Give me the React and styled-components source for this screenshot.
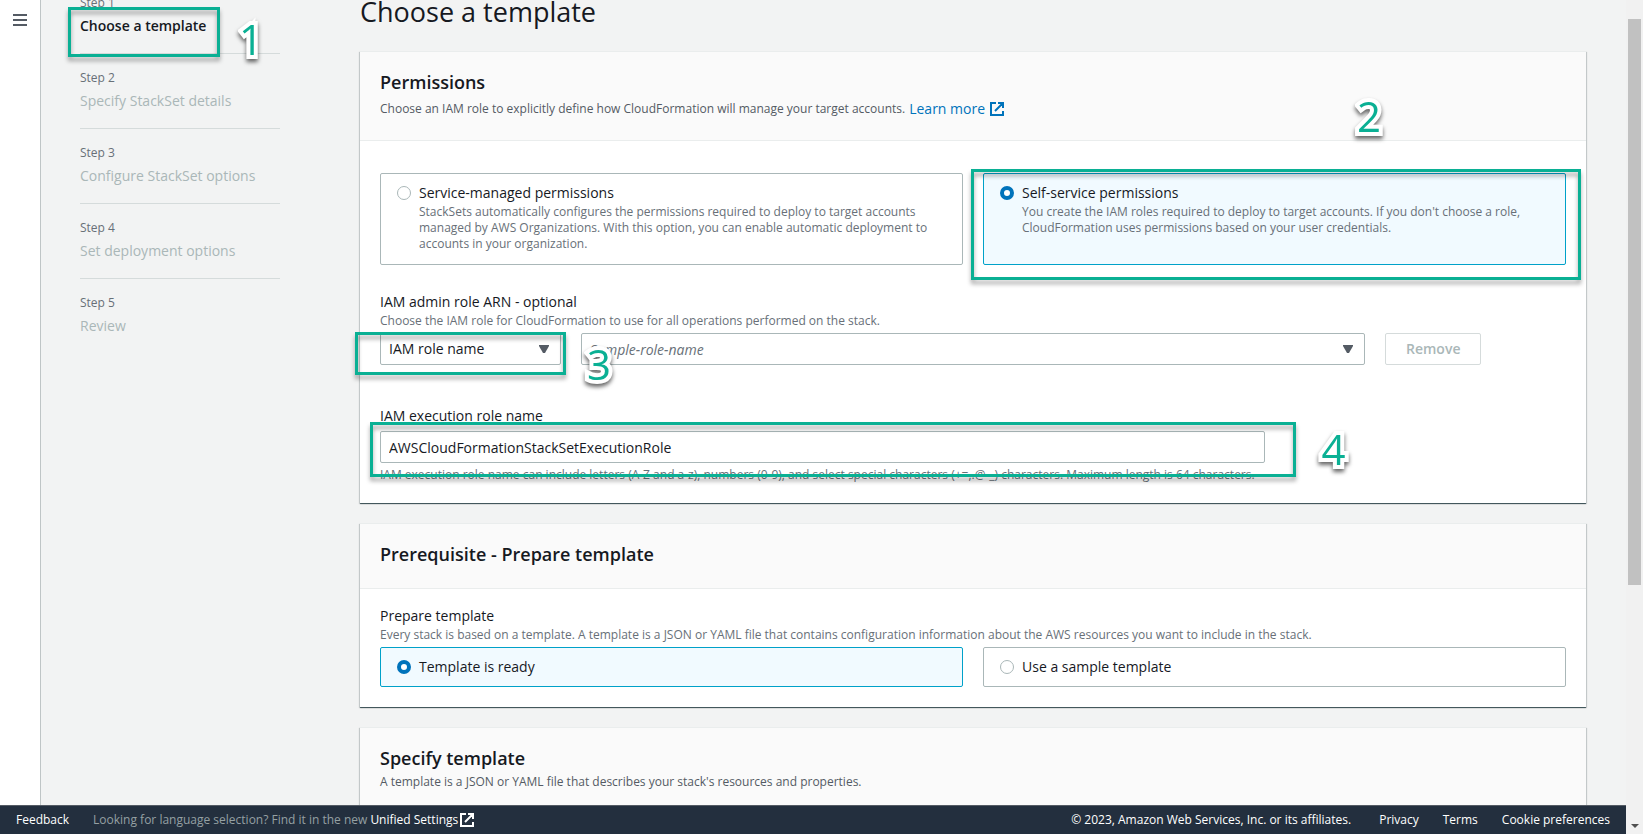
import React from "react";
import styled, { createGlobalStyle, css } from "styled-components";

const GlobalStyle = createGlobalStyle`
  *, *::before, *::after { box-sizing: border-box; }
  body {
    margin: 0;
    background: #f2f3f3;
    color: #16191f;
    font: 14px/22px "Open Sans", "Noto Sans", sans-serif;
  }
  button, input, select { font: inherit; color: inherit; }
  h1, h2, p, ol, fieldset { margin: 0; padding: 0; border: 0; min-width: 0; }
`;

const Shell = styled.div`
  display: flex;
  flex-direction: column;
  height: 100vh;
  overflow: hidden;
`;

const Window = styled.div`
  display: flex;
  height: 100vh;
`;

const Column = styled.div`
  flex: 1;
  min-width: 0;
`;

const Workspace = styled.div`
  flex: 1;
  min-height: 0;
  display: flex;
`;

const Rail = styled.nav`
  flex: none;
  width: 41px;
  padding: 11px 0 0 10px;
  background: #fff;
  border-right: 1px solid #bfc5c6;
`;

const IconButton = styled.button`
  display: flex;
  padding: 3px;
  border: 0;
  background: none;
  color: #545b64;
`;

const Viewport = styled.div`
  flex: 1;
  min-width: 0;
  overflow: hidden;
`;

/* The page is scrolled slightly past its first line. */
const Scrolled = styled.div`
  display: flex;
  gap: 80px;
  margin-top: -5px;
  padding: 0 40px 0 39px;
`;

const Steps = styled.ol`
  flex: none;
  width: 200px;
  list-style: none;
`;

const Step = styled.li`
  position: relative;
  display: flex;
  flex-direction: column;
  gap: 4px;
  padding-bottom: 16px;
  & + & {
    padding-top: 16px;
    border-top: 1px solid #d5dbdb;
  }
`;

const StepLabel = styled.span`
  font-size: 12px;
  line-height: 16px;
  color: #687078;
`;

const StepName = styled.span`
  color: ${(p) => (p.$active ? "#16191f" : "#aab7b8")};
  font-weight: ${(p) => (p.$active ? 600 : 400)};
`;

const Main = styled.main`
  flex: 1;
  min-width: 0;
  display: flex;
  flex-direction: column;
  gap: 20px;
`;

const PageTitle = styled.h1`
  padding-bottom: 2px;
  font-size: 27px;
  line-height: 34px;
  font-weight: 400;
`;

const Card = styled.section`
  border-top: 1px solid #eaeded;
  background: #fff;
  box-shadow: 0 1px 1px 0 rgba(0, 28, 36, 0.3), 1px 1px 1px 0 rgba(0, 28, 36, 0.15),
    -1px 1px 1px 0 rgba(0, 28, 36, 0.15), 0 1px 0 0 #879596;
`;

const CardHeader = styled.header`
  padding: 16px 20px 20px;
  background: #fafafa;
  border-bottom: 1px solid #eaeded;
`;

const CardTitle = styled.h2`
  font-size: 18px;
  line-height: 28px;
  font-weight: 600;
`;

const CardText = styled.p`
  display: flex;
  align-items: center;
  gap: 4px;
  margin-top: 2px;
  font-size: 12px;
  line-height: ${(p) => (p.$tall ? 22 : 16)}px;
  color: #545b64;
`;

const CardBody = styled.div`
  display: flex;
  flex-direction: column;
  padding: ${(p) => (p.$roomy ? 32 : 16)}px 20px 20px;
`;

const Link = styled.a`
  display: inline-flex;
  align-items: center;
  gap: 5px;
  font-size: 14px;
  color: #0073bb;
  text-decoration: none;
`;

const TileRow = styled.div`
  display: grid;
  grid-template-columns: 1fr 1fr;
  gap: 20px;
`;

const TileFrame = styled.label`
  position: relative;
  display: flex;
  gap: 8px;
  padding: 8px 16px;
  border: 1px solid ${(p) => (p.$selected ? "#00a1c9" : "#aab7b8")};
  border-radius: 2px;
  background: ${(p) => (p.$selected ? "#f1faff" : "#fff")};
`;

const Radio = styled.input`
  appearance: none;
  flex: none;
  width: 14px;
  height: 14px;
  margin: 4px 0;
  border: 1px solid #aab7b8;
  border-radius: 50%;
  background: #fff;
  &:checked { border: 4px solid #0073bb; }
`;

const TileText = styled.span`
  display: flex;
  flex-direction: column;
`;

const TileNote = styled.span`
  padding-bottom: 4px;
  font-size: 12px;
  line-height: 16px;
  color: #687078;
`;

const Field = styled.div`
  display: flex;
  flex-direction: column;
  margin-top: ${(p) => p.$space || 0}px;
`;

const labelText = css`
  display: block;
  line-height: 22px;
`;

const FieldLabel = styled.label`${labelText}`;
const FieldLegend = styled.legend`${labelText} padding: 0;`;

const Hint = styled.p`
  font-size: 12px;
  line-height: 16px;
  color: #687078;
`;

const ControlGrid = styled.div`
  display: grid;
  grid-template-columns: repeat(12, 1fr);
  gap: 20px;
  margin: 4px 0;
`;

const Cell = styled.div`
  position: relative;
  grid-column: span ${(p) => p.$span};
`;

const control = css`
  display: block;
  width: 100%;
  height: 32px;
  padding: 0 8px;
  border: 1px solid #aab7b8;
  border-radius: 2px;
  background: #fff;
  appearance: none;
  outline: 0;
`;

const Select = styled.select`${control}`;

const TextInput = styled.input`
  ${control}
  &::placeholder { color: #687078; font-style: italic; opacity: 1; }
`;

const Caret = styled.svg`
  position: absolute;
  top: 12px;
  right: 12px;
  pointer-events: none;
`;

const RemoveButton = styled.button`
  height: 32px;
  padding: 0 20px;
  border: 1px solid #d5dbdb;
  border-radius: 2px;
  background: #fff;
  color: #aab7b8;
  font-weight: 600;
`;

const Footer = styled.footer`
  flex: none;
  display: flex;
  align-items: center;
  justify-content: space-between;
  height: 29px;
  padding: 0 16px;
  border-top: 1px solid #545b64;
  background: #232f3e;
  color: #95a0a3;
  font-size: 12px;
  line-height: 16px;
`;

const FooterGroup = styled.div`
  display: flex;
  align-items: center;
  gap: 24px;
`;

const FooterLink = styled.a`
  display: inline-flex;
  align-items: center;
  gap: 2px;
  color: #fff;
  font-weight: 500;
  text-decoration: none;
`;

const FooterLine = styled.span`
  display: flex;
  align-items: center;
  gap: 3px;
`;

const Copyright = styled.span`
  margin-right: 4px;
  color: #fff;
  font-weight: 500;
`;

const ScrollTrack = styled.div`
  flex: none;
  display: flex;
  flex-direction: column;
  align-items: center;
  justify-content: space-between;
  width: 17px;
  padding: 19px 0 6px;
  background: #f1f1f1;
`;

const ScrollThumb = styled.div`
  width: 13px;
  height: 70%;
  background: #c1c1c1;
`;

/* Tutorial call-outs that lie over the controls. */
const Highlight = styled.span`
  position: absolute;
  z-index: 1;
  top: ${(p) => p.$box[0]}px;
  right: ${(p) => p.$box[1]}px;
  bottom: ${(p) => p.$box[2]}px;
  left: ${(p) => p.$box[3]}px;
  border: 3px solid #0ab094;
  filter: drop-shadow(0 4px 2px rgba(0, 0, 0, 0.35));
  pointer-events: none;
`;

const Marker = styled.span`
  position: absolute;
  z-index: 2;
  top: ${(p) => p.$top}px;
  left: ${(p) => p.$left};
  color: #0ab094;
  font: 500 42px/42px "Open Sans", "Noto Sans", sans-serif;
  -webkit-text-stroke: 8px #fff;
  stroke-linejoin: round;
  paint-order: stroke fill;
  filter: drop-shadow(0 3px 2px rgba(0, 0, 0, 0.6));
  pointer-events: none;
`;

function MenuIcon() {
  return (
    <svg width="14" height="12" viewBox="0 0 14 12" fill="currentColor" aria-hidden="true">
      <path d="M0 0h14v2H0zM0 5h14v2H0zM0 10h14v2H0z" />
    </svg>
  );
}

function ExternalIcon() {
  return (
    <svg width="14" height="14" viewBox="0 0 14 14" fill="none" stroke="currentColor" strokeWidth="2" aria-hidden="true">
      <path d="M6 1H1v12h12V9M8 1h5v5M13 1L5 9" />
    </svg>
  );
}

function CaretIcon() {
  return (
    <Caret width="10" height="8" viewBox="0 0 10 8" aria-hidden="true">
      <path d="M0 0h10v1L6 8H4L0 1z" fill="#545b64" />
    </Caret>
  );
}

function Tile({ name, title, note, selected, children }) {
  return (
    <TileFrame $selected={selected}>
      <Radio type="radio" name={name} defaultChecked={selected} />
      <TileText>
        <span>{title}</span>
        {note && <TileNote>{note}</TileNote>}
      </TileText>
      {children}
    </TileFrame>
  );
}

const steps = [
  "Choose a template",
  "Specify StackSet details",
  "Configure StackSet options",
  "Set deployment options",
  "Review",
];

export default function App() {
  return (
    <Window>
      <GlobalStyle />
      <Column>
        <Shell>
          <Workspace>
            <Rail>
              <IconButton aria-label="Open navigation"><MenuIcon /></IconButton>
            </Rail>
            <Viewport>
              <Scrolled>
                <Steps>
                  {steps.map((name, i) => (
                    <Step key={name}>
                      <StepLabel>Step {i + 1}</StepLabel>
                      <StepName $active={i === 0}>{name}</StepName>
                      {i === 0 && (
                        <>
                          <Highlight $box={[12, 60, -4, -12]} />
                          <Marker $top={23} $left="159px">1</Marker>
                        </>
                      )}
                    </Step>
                  ))}
                </Steps>
                <Main>
                  <PageTitle>Choose a template</PageTitle>
                  <Card>
                    <CardHeader>
                      <CardTitle>Permissions</CardTitle>
                      <CardText $tall>
                        <span>Choose an IAM role to explicitly define how CloudFormation will manage your target accounts.</span>
                        <Link href="#learn">Learn more <ExternalIcon /></Link>
                      </CardText>
                    </CardHeader>
                    <CardBody $roomy>
                      <TileRow>
                        <Tile
                          name="permissions"
                          title="Service-managed permissions"
                          note="StackSets automatically configures the permissions required to deploy to target accounts managed by AWS Organizations. With this option, you can enable automatic deployment to accounts in your organization."
                        />
                        <Tile
                          name="permissions"
                          selected
                          title="Self-service permissions"
                          note="You create the IAM roles required to deploy to target accounts. If you don't choose a role, CloudFormation uses permissions based on your user credentials."
                        >
                          <Highlight $box={[-5, -16, -16, -13]} />
                          <Marker $top={-79} $left="373px">2</Marker>
                        </Tile>
                      </TileRow>
                      <Field $space={26}>
                        <FieldLabel htmlFor="admin-kind">IAM admin role ARN - optional</FieldLabel>
                        <Hint>Choose the IAM role for CloudFormation to use for all operations performed on the stack.</Hint>
                        <ControlGrid>
                          <Cell $span={2}>
                            <Select id="admin-kind" defaultValue="name">
                              <option value="name">IAM role name</option>
                            </Select>
                            <CaretIcon />
                            <Highlight $box={[-1, -5, -10, -25]} />
                          </Cell>
                          <Cell $span={8}>
                            <TextInput aria-label="Role name" placeholder="Sample-role-name" />
                            <CaretIcon />
                            <Marker $top={10} $left="6px">3</Marker>
                          </Cell>
                          <Cell $span={2}>
                            <RemoveButton disabled>Remove</RemoveButton>
                          </Cell>
                        </ControlGrid>
                      </Field>
                      <Field $space={36}>
                        <FieldLabel htmlFor="exec-role">IAM execution role name</FieldLabel>
                        <ControlGrid>
                          <Cell $span={9}>
                            <TextInput id="exec-role" defaultValue="AWSCloudFormationStackSetExecutionRole" />
                            <Highlight $box={[-9, -31, -14, -10]} />
                            <Marker $top={-3} $left="calc(100% + 57px)">4</Marker>
                          </Cell>
                        </ControlGrid>
                        <Hint>
                          IAM execution role name can include letters (A-Z and a-z), numbers (0-9), and select special characters (+=,.@-_) characters. Maximum length is 64 characters.
                        </Hint>
                      </Field>
                    </CardBody>
                  </Card>
                  <Card>
                    <CardHeader>
                      <CardTitle>Prerequisite - Prepare template</CardTitle>
                    </CardHeader>
                    <CardBody>
                      <fieldset>
                        <FieldLegend>Prepare template</FieldLegend>
                        <Hint>
                          Every stack is based on a template. A template is a JSON or YAML file that contains configuration information about the AWS resources you want to include in the stack.
                        </Hint>
                        <Field $space={4}>
                          <TileRow>
                            <Tile name="source" title="Template is ready" selected />
                            <Tile name="source" title="Use a sample template" />
                          </TileRow>
                        </Field>
                      </fieldset>
                    </CardBody>
                  </Card>
                  <Card>
                    <CardHeader>
                      <CardTitle>Specify template</CardTitle>
                      <CardText>A template is a JSON or YAML file that describes your stack's resources and properties.</CardText>
                    </CardHeader>
                  </Card>
                </Main>
              </Scrolled>
            </Viewport>
          </Workspace>
          <Footer>
            <FooterGroup>
              <FooterLink href="#feedback">Feedback</FooterLink>
              <FooterLine>
                Looking for language selection? Find it in the new
                <FooterLink href="#settings">Unified Settings<ExternalIcon /></FooterLink>
              </FooterLine>
            </FooterGroup>
            <FooterGroup>
              <Copyright>© 2023, Amazon Web Services, Inc. or its affiliates.</Copyright>
              <FooterLink href="#privacy">Privacy</FooterLink>
              <FooterLink href="#terms">Terms</FooterLink>
              <FooterLink href="#cookies">Cookie preferences</FooterLink>
            </FooterGroup>
          </Footer>
        </Shell>
      </Column>
      <ScrollTrack>
        <ScrollThumb />
        <svg width="8" height="4" viewBox="0 0 8 4" aria-hidden="true">
          <path d="M0 0h8L4 4z" fill="#505050" />
        </svg>
      </ScrollTrack>
    </Window>
  );
}
